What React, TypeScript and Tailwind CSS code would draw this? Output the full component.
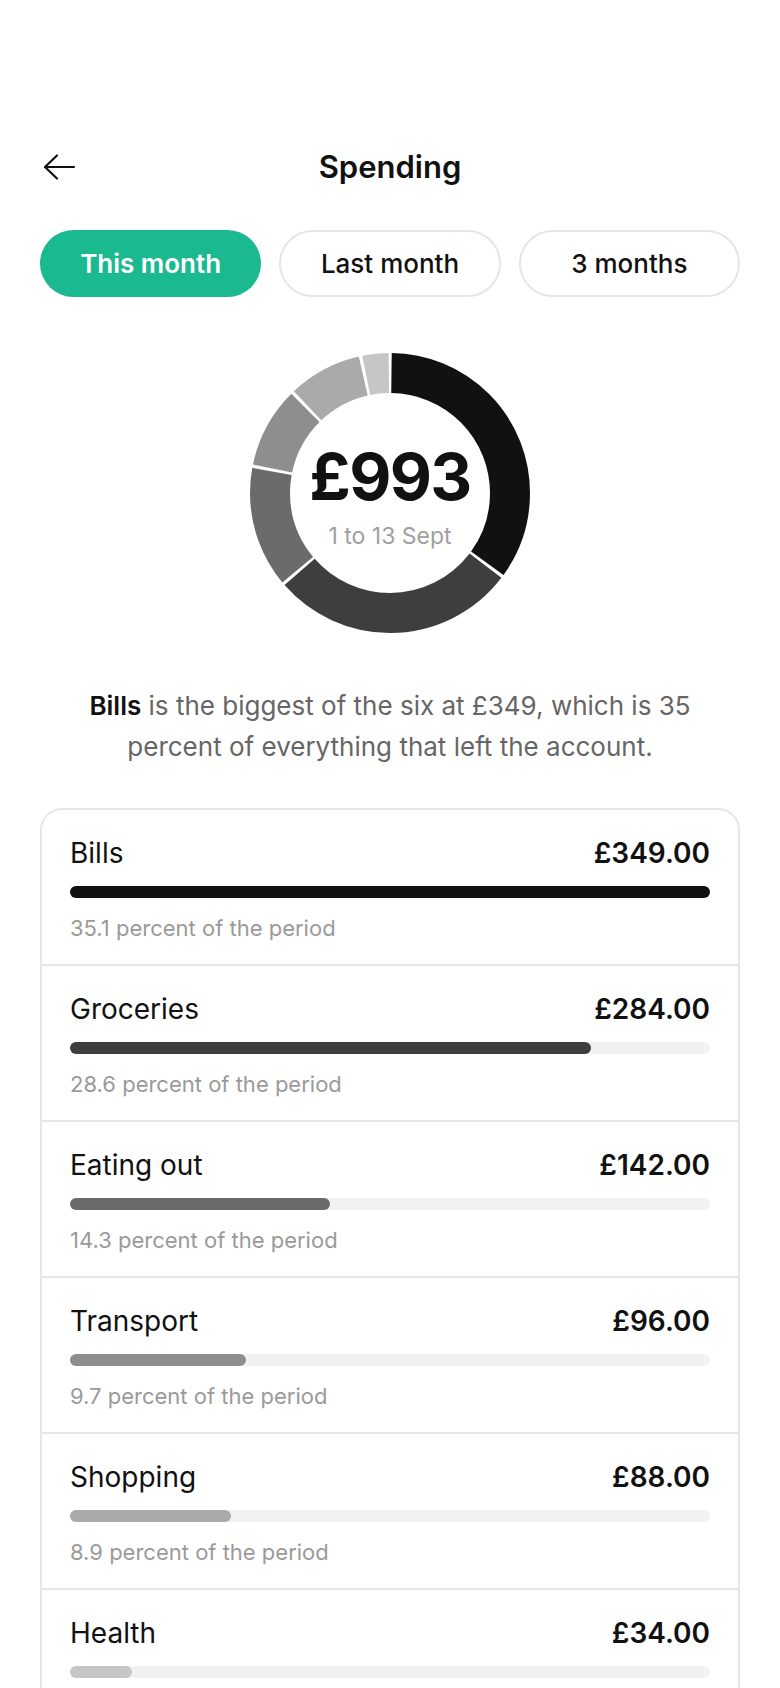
import React from "react";

const categories = [
  { name: "Bills", amount: 349, pct: "35.1", color: "#111111" },
  { name: "Groceries", amount: 284, pct: "28.6", color: "#3e3e3e" },
  { name: "Eating out", amount: 142, pct: "14.3", color: "#6b6b6b" },
  { name: "Transport", amount: 96, pct: "9.7", color: "#8e8e8e" },
  { name: "Shopping", amount: 88, pct: "8.9", color: "#aaaaaa" },
  { name: "Health", amount: 34, pct: "3.4", color: "#c6c6c6" },
];

const total = categories.reduce((s, c) => s + c.amount, 0);
const max = categories[0].amount;

const Donut = () => {
  const r = 120;
  const circ = 2 * Math.PI * r;
  const gap = 3;
  let offset = 0;
  return (
    <svg width="280" height="280" viewBox="0 0 280 280">
      <g transform="rotate(-90 140 140)">
        {categories.map((c) => {
          const len = (c.amount / total) * circ;
          const el = (
            <circle
              key={c.name}
              cx="140"
              cy="140"
              r={r}
              fill="none"
              stroke={c.color}
              strokeWidth="40"
              strokeDasharray={`${len - gap} ${circ - len + gap}`}
              strokeDashoffset={-(offset + gap / 2)}
            />
          );
          offset += len;
          return el;
        })}
      </g>
    </svg>
  );
};

export default function App() {
  return (
    <div className="min-h-screen bg-white px-10 pt-[139px] text-[#111]" style={{ fontFamily: "Inter, 'Noto Sans', sans-serif" }}>
      <div className="grid h-14 grid-cols-[1fr_auto_1fr] items-center">
        <svg className="ml-[2px]" width="34" height="28" viewBox="0 0 34 28" fill="none" stroke="#111" strokeWidth="2.2" strokeLinecap="round" strokeLinejoin="round">
          <path d="M32 14H3" />
          <path d="M15 2.5L3 14L15 25.5" />
        </svg>
        <h1 className="text-[31px] font-semibold">Spending</h1>
        <div />
      </div>

      <div className="mt-[35px] grid grid-cols-3 gap-[18px]">
        <button className="h-[67px] rounded-full bg-[#1bb98f] text-[26px] font-semibold text-white">This month</button>
        <button className="h-[67px] rounded-full border-2 border-[#e6e6e6] text-[26px] font-medium">Last month</button>
        <button className="h-[67px] rounded-full border-2 border-[#e6e6e6] text-[26px] font-medium">3 months</button>
      </div>

      <div className="mt-14 flex justify-center">
        <div className="relative h-[280px] w-[280px]">
          <Donut />
          <div className="absolute inset-0 flex flex-col items-center justify-center pt-2">
            <div className="text-[65px] font-bold leading-[64px] tracking-tight">£993</div>
            <div className="mt-[13px] text-[23px] leading-[28px] text-[#a0a0a0]">1 to 13 Sept</div>
          </div>
        </div>
      </div>

      <p className="mt-[52px] px-8 text-center text-[26px] leading-[41px] text-[#666]">
        <span className="font-semibold text-[#111]">Bills</span> is the biggest of the six at £349, which is 35 percent of everything that left the account.
      </p>

      <div className="mt-[41px] rounded-[22px] border-2 border-[#e6e6e6]">
        {categories.map((c, i) => (
          <div key={c.name} className={`px-7 pt-[28px] pb-[22px] ${i > 0 ? "border-t-2 border-[#e6e6e6]" : ""}`}>
            <div className="flex items-center justify-between text-[28px] leading-[30px]">
              <span>{c.name}</span>
              <span className="font-semibold">£{c.amount.toFixed(2)}</span>
            </div>
            <div className="mt-[18px] h-3 rounded-full bg-[#f2f2f2]">
              <div className="h-3 rounded-full" style={{ width: `${(c.amount / max) * 100}%`, backgroundColor: c.color }} />
            </div>
            <div className="mt-4 text-[22px] leading-[28px] text-[#9a9a9a]">{c.pct} percent of the period</div>
          </div>
        ))}
      </div>
    </div>
  );
}
